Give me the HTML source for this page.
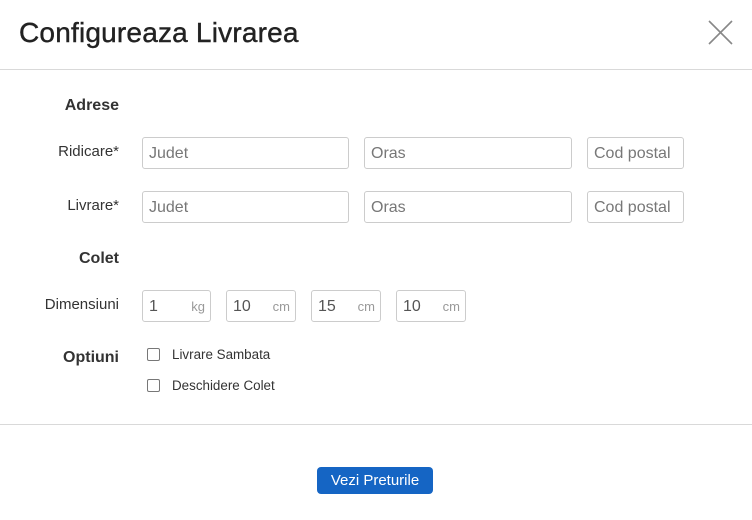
<!DOCTYPE html>
<html><head><style>
*{box-sizing:border-box;margin:0;padding:0}
body{width:752px;height:520px;background:#fff;position:relative;font-family:"Liberation Sans",sans-serif;color:#333;overflow:hidden}
.a{position:absolute}
.title{left:19px;top:17px;font-size:28px;color:#222;letter-spacing:0.2px;-webkit-text-stroke:0.4px #222}
.hr{left:0;width:752px;height:1px;background:#d9d9d9}
.sec{font-size:16px;font-weight:bold;color:#333;text-align:right;width:119px;left:0}
.lbl{font-size:15px;color:#333;text-align:right;width:119px;left:0}
.in{border:1px solid #ccc;border-radius:3px;height:32px;font-size:16px;color:#777;padding:7px 0 0 6px}
.dim{border:1px solid #ccc;border-radius:3px;height:32px;width:70px;font-size:16px;color:#555;padding:7px 0 0 6px}
.dim span{position:absolute;right:5px;top:8px;font-size:13px;color:#999}
.cb{width:13px;height:13px;border:1px solid #777;border-radius:2px}
.ct{font-size:13.4px;color:#333}
.btn{left:317px;top:467px;width:116px;height:27px;background:#1565c4;border-radius:4px;color:#fff;font-size:15px;text-align:center;line-height:27px}
</style></head><body>
<div class="a title">Configureaza Livrarea</div>
<svg class="a" style="left:708px;top:20px" width="25" height="25"><path d="M1 1L24 24M24 1L1 24" stroke="#888" stroke-width="1.6" fill="none"/></svg>
<div class="a hr" style="top:69px"></div>

<div class="a sec" style="top:97px">Adrese</div>
<div class="a lbl" style="top:143px">Ridicare*</div>
<div class="a in" style="left:142px;top:137px;width:207px">Judet</div>
<div class="a in" style="left:364px;top:137px;width:208px">Oras</div>
<div class="a in" style="left:587px;top:137px;width:97px">Cod postal</div>
<div class="a lbl" style="top:197px">Livrare*</div>
<div class="a in" style="left:142px;top:191px;width:207px">Judet</div>
<div class="a in" style="left:364px;top:191px;width:208px">Oras</div>
<div class="a in" style="left:587px;top:191px;width:97px">Cod postal</div>

<div class="a sec" style="top:250px">Colet</div>
<div class="a lbl" style="top:296px">Dimensiuni</div>
<div class="a dim" style="left:142px;top:290px;width:69px">1<span>kg</span></div>
<div class="a dim" style="left:226px;top:290px">10<span>cm</span></div>
<div class="a dim" style="left:311px;top:290px">15<span>cm</span></div>
<div class="a dim" style="left:396px;top:290px">10<span>cm</span></div>

<div class="a sec" style="top:349px">Optiuni</div>
<div class="a cb" style="left:147px;top:348px"></div>
<div class="a ct" style="left:172px;top:347px">Livrare Sambata</div>
<div class="a cb" style="left:147px;top:379px"></div>
<div class="a ct" style="left:172px;top:378px">Deschidere Colet</div>

<div class="a hr" style="top:424px"></div>
<div class="a btn">Vezi Preturile</div>
</body></html>
